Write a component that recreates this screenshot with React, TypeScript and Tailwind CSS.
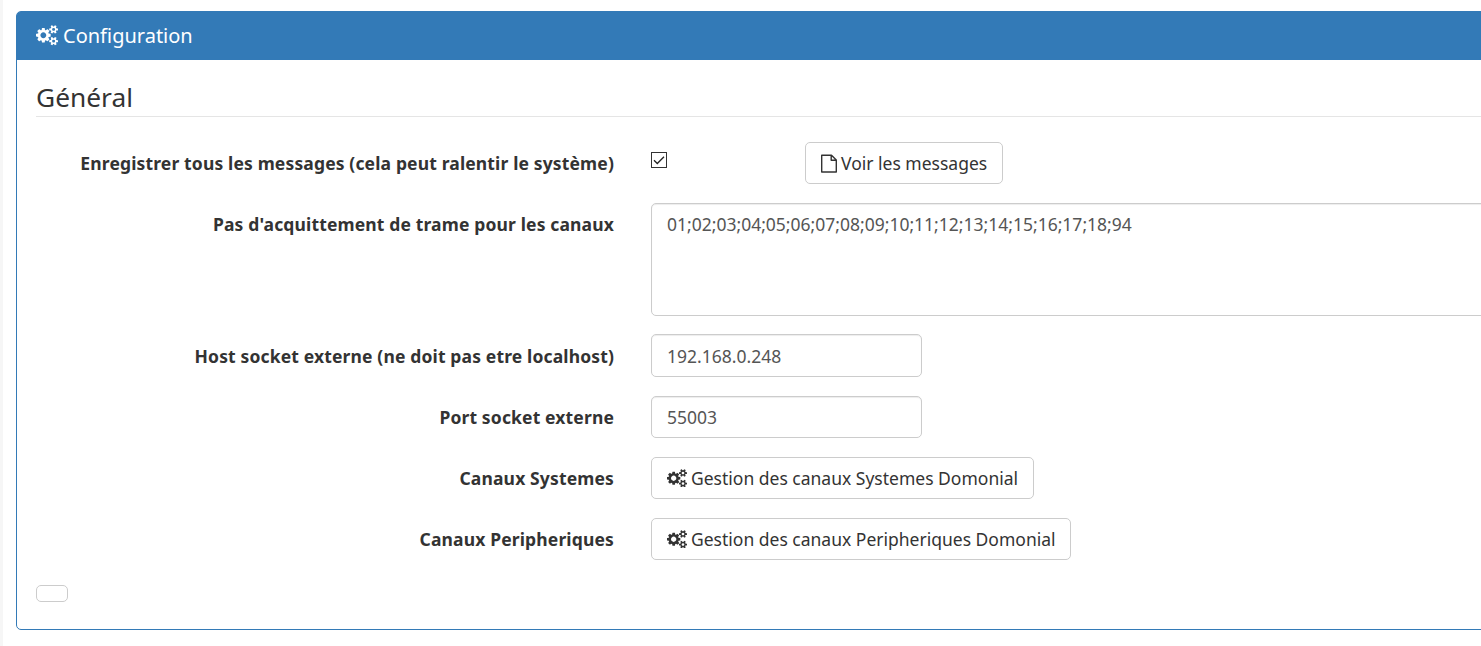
import React from "react";

function CogsIcon({ className }: { className: string }) {
  return (
    <svg viewBox="0 0 1920 1792" preserveAspectRatio="none" className={`shrink-0 ${className}`} fill="currentColor" aria-hidden="true">
      <path d="M896 896q0-106-75-181t-181-75-181 75-75 181 75 181 181 75 181-75 75-181zm768 512q0-52-38-90t-90-38-90 38-38 90q0 53 37.500 90.500t90.500 37.500 90.500-37.500 37.500-90.500zm0-1024q0-52-38-90t-90-38-90 38-38 90q0 53 37.500 90.500t90.500 37.500 90.500-37.500 37.500-90.500zm-384 421v185q0 10-7 19.500t-16 10.500l-155 24q-11 35-32 76 34 48 90 115 7 11 7 20 0 12-7 19-23 30-82.500 89.500t-78.500 59.500q-11 0-21-7l-115-90q-37 19-77 31-11 108-23 155-7 24-30 24h-186q-11 0-20-7.500t-10-17.500l-23-153q-34-10-75-31l-118 89q-7 7-20 7-11 0-21-8-144-133-144-160 0-9 7-19 10-14 41-53t47-61q-23-44-35-82l-152-24q-10-1-17-9.500t-7-19.500v-185q0-10 7-19.500t16-10.500l155-24q11-35 32-76-34-48-90-115-7-11-7-20 0-12 7-20 22-30 82-89t79-59q11 0 21 7l115 90q34-18 77-32 11-108 23-154 7-24 30-24h186q11 0 20 7.500t10 17.500l23 153q34 10 75 31l118-89q8-7 20-7 11 0 21 8 144 133 144 160 0 8-7 19-12 16-42 54t-45 60q23 48 34 82l152 23q10 2 17 10.500t7 19.500zm640 533v140q0 16-149 31-12 27-30 52 51 113 51 138 0 4-4 7-122 71-124 71-8 0-46-47t-52-68q-20 2-30 2t-30-2q-14 21-52 68t-46 47q-2 0-124-71-4-3-4-7 0-25 51-138-18-25-30-52-149-15-149-31v-140q0-16 149-31 13-29 30-52-51-113-51-138 0-4 4-7 4-2 35-20t59-34 30-16q8 0 46 46.500t52 67.500q20-2 30-2t30 2q51-71 92-112l6-2q4 0 124 70 4 3 4 7 0 25-51 138 17 23 30 52 149 15 149 31zm0-1024v140q0 16-149 31-12 27-30 52 51 113 51 138 0 4-4 7-122 71-124 71-8 0-46-47t-52-68q-20 2-30 2t-30-2q-14 21-52 68t-46 47q-2 0-124-71-4-3-4-7 0-25 51-138-18-25-30-52-149-15-149-31v-140q0-16 149-31 13-29 30-52-51-113-51-138 0-4 4-7 4-2 35-20t59-34 30-16q8 0 46 46.500t52 67.500q20-2 30-2t30 2q51-71 92-112l6-2q4 0 124 70 4 3 4 7 0 25-51 138 17 23 30 52 149 15 149 31z" />
    </svg>
  );
}

function FileIcon() {
  return (
    <svg viewBox="0 0 16 19" className="mr-[4px] h-[19px] w-4 shrink-0" fill="none" stroke="#333" strokeWidth="1.4" strokeLinejoin="round" aria-hidden="true">
      <path d="M.7 1.2h9.800l4.800 4.800v12H.7z M10.200 1.200v5h5" />
    </svg>
  );
}

function Checkbox() {
  return (
    <span className="mt-[10px] grid h-4 w-4 shrink-0">
      <input type="checkbox" defaultChecked className="peer col-start-1 row-start-1 h-4 w-4 appearance-none border border-[#333] bg-white" />
      <svg viewBox="0 0 16 16" className="pointer-events-none invisible col-start-1 row-start-1 h-4 w-4 peer-checked:visible" fill="none" stroke="#222" strokeWidth="1.3" aria-hidden="true">
        <path d="M3 8.200l3.300 3.300L13 4.700" />
      </svg>
    </span>
  );
}

function Row({ label, className, children }: { label: string; className: string; children: React.ReactNode }) {
  return (
    <div className={`flex ${className}`}>
      <div className="mr-[37px] w-[578px] shrink-0 pt-[9px] text-right font-bold tracking-[0.145px]">{label}</div>
      {children}
    </div>
  );
}

const button = "flex h-[42px] items-center rounded-[5px] border border-[#ccc] bg-white pl-[15px] text-[#333]";
const input = "w-[271px] rounded-[5px] border border-[#ccc] px-[15px] text-[#555] shadow-[inset_0_1px_1px_rgba(0,0,0,0.075)] outline-none";

export default function App() {
  return (
    <div className="flex h-[646px] w-[1481px] overflow-hidden bg-white font-['Noto_Sans',sans-serif] text-[17.5px] leading-[25px] whitespace-nowrap text-[#333]">
      <div className="w-[3px] shrink-0 bg-[#f6f6f6]" />
      <section className="mt-[11px] ml-[13px] h-[619px] w-[1500px] shrink-0 rounded-[5px] border border-[#337ab7]">
        <header className="flex h-[48px] items-center rounded-t-[3px] bg-[#337ab7] pb-px pl-[19px] text-[20px] text-white">
          <CogsIcon className="mr-[5px] h-[20.5px] w-[22px]" />
          Configuration
        </header>
        <div className="pl-[19px]">
          <h2 className="h-[57px] border-b border-[#e5e5e5] pt-[19px] text-[26.3px] leading-[36px]">Général</h2>
          <Row label="Enregistrer tous les messages (cela peut ralentir le système)" className="mt-[25px] h-[61px]">
            <Checkbox />
            <button className={`${button} ml-[138px] w-[198px]`}><FileIcon />Voir les messages</button>
          </Row>
          <Row label="Pas d'acquittement de trame pour les canaux" className="h-[131px]">
            <textarea className="h-[113px] w-[860px] resize-none rounded-[5px] border border-[#ccc] px-[15px] py-[8px] text-[#555] shadow-[inset_0_1px_1px_rgba(0,0,0,0.075)] outline-none" defaultValue="01;02;03;04;05;06;07;08;09;10;11;12;13;14;15;16;17;18;94" />
          </Row>
          <Row label="Host socket externe (ne doit pas etre localhost)" className="h-[62px] [&>div]:pt-[10px]">
            <input className={`${input} h-[43px]`} defaultValue="192.168.0.248" />
          </Row>
          <Row label="Port socket externe" className="h-[61px]">
            <input className={`${input} h-[42px]`} defaultValue="55003" />
          </Row>
          <Row label="Canaux Systemes" className="h-[61px]">
            <button className={`${button} w-[383px]`}><CogsIcon className="mr-[4px] h-[18.5px] w-5" />Gestion des canaux Systemes Domonial</button>
          </Row>
          <Row label="Canaux Peripheriques" className="h-[67px]">
            <button className={`${button} w-[420px]`}><CogsIcon className="mr-[4px] h-[18.5px] w-5" />Gestion des canaux Peripheriques Domonial</button>
          </Row>
          <button className="block h-[17px] w-[32px] rounded-[5px] border border-[#ccc]" />
        </div>
      </section>
    </div>
  );
}
